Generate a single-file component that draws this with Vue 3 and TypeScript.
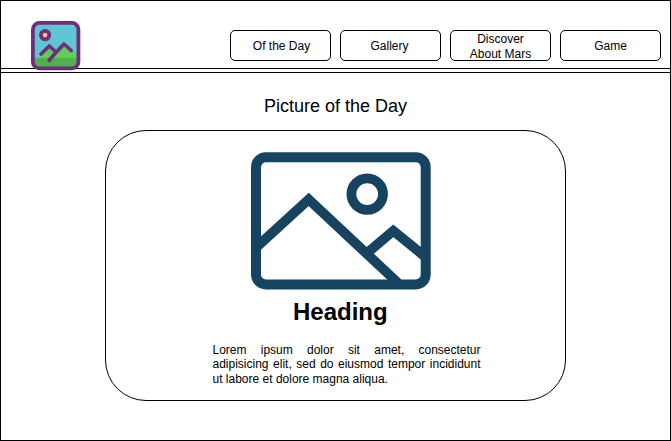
<script setup lang="ts">
interface NavItem {
  id: string
  label: string
}

const navItems: NavItem[] = [
  { id: 'day', label: 'Of the Day' },
  { id: 'gallery', label: 'Gallery' },
  { id: 'discover', label: 'Discover About Mars' },
  { id: 'game', label: 'Game' },
]
</script>

<template>
  <div class="page">
    <header class="header">
      <svg class="logo" viewBox="0 0 50 50">
        <defs>
          <clipPath id="logo-frame">
            <rect x="1.5" y="1.5" width="46.5" height="46.5" rx="6" />
          </clipPath>
        </defs>
        <g clip-path="url(#logo-frame)">
          <rect width="50" height="50" fill="#5fc5d2" />
          <path d="M0 43 L19 26 L24 33 L34 23 L50 37 V50 H0Z" fill="#62cc5a" />
          <path d="M0 37 H50 V50 H0Z" fill="#53b04e" />
        </g>
        <rect x="1.9" y="1.9" width="45.5" height="45.5" rx="6.5" fill="none" stroke="#6d2e7c" stroke-width="3.8" />
        <circle cx="14.1" cy="14.1" r="4.2" fill="#fbc65f" stroke="#6d2e7c" stroke-width="3.7" />
        <path d="M10 33 L18.3 25 L24.5 30.5 M18 39.5 L24.5 32 L33 23 L40.2 29.5" fill="none" stroke="#6d2e7c" stroke-width="3.6" stroke-linecap="round" stroke-linejoin="round" />
      </svg>
      <nav class="nav">
        <button v-for="item in navItems" :key="item.id" :class="['nav-item', item.id]" type="button">{{ item.label }}</button>
      </nav>
    </header>
    <div class="divider"></div>
    <main class="content">
      <h1 class="title">Picture of the Day</h1>
      <article class="card">
        <svg class="picture" viewBox="0 0 180 138">
          <path d="M5 95.6 L57.7 47.4 L147 131 M115.5 101.6 L142.3 78.8 L174 104.6" fill="none" stroke="#154360" stroke-width="9.8" />
          <rect x="5" y="5.2" width="169.7" height="127.2" rx="10" fill="none" stroke="#154360" stroke-width="10" />
          <circle cx="116.2" cy="42.1" r="15.8" fill="none" stroke="#154360" stroke-width="9.8" />
        </svg>
        <h2 class="heading">Heading</h2>
        <p class="text">Lorem ipsum dolor sit amet, consectetur adipisicing elit, sed do eiusmod tempor incididunt ut labore et dolore magna aliqua.</p>
      </article>
    </main>
  </div>
</template>

<style>
body {
  margin: 0;
  background: #fff;
}
</style>

<style scoped>
.page {
  box-sizing: border-box;
  width: 671px;
  height: 441px;
  border: 1px solid #000;
  overflow: hidden;
  font-family: "Liberation Sans", Arial, sans-serif;
  color: #000;
}
.header {
  box-sizing: border-box;
  display: flex;
  justify-content: space-between;
  align-items: flex-start;
  height: 68px;
  padding: 20px 9px 0 30px;
  border-bottom: 1px solid #000;
}
.logo {
  position: relative;
  z-index: 1;
  width: 50px;
  height: 50px;
}
.nav {
  display: flex;
  gap: 9px;
  padding-top: 9px;
}
.nav-item {
  box-sizing: border-box;
  width: 101px;
  height: 31px;
  padding: 2px 12px 0;
  border: 1px solid #000;
  border-radius: 5px;
  background: #fff;
  font: 12px/15px "Liberation Sans", Arial, sans-serif;
  color: #000;
}
.nav-item.day {
  padding-right: 10px;
}
.nav-item.gallery {
  padding-right: 14px;
}
.nav-item.discover {
  padding-top: 1px;
}
.divider {
  height: 3px;
  border-bottom: 1px solid #000;
}
.content {
  display: flex;
  flex-direction: column;
  align-items: center;
  padding-top: 22px;
}
.title {
  margin: 0 0 13px;
  font-size: 18px;
  line-height: 22px;
  font-weight: 400;
}
.card {
  box-sizing: border-box;
  display: flex;
  flex-direction: column;
  width: 461px;
  height: 271px;
  padding: 21px 84px 0 106.5px;
  border: 1px solid #000;
  border-radius: 41px;
}
.picture {
  width: 180px;
  height: 138px;
  margin-left: 38.5px;
}
.heading {
  margin: 8px 0 0;
  padding-left: 80.5px;
  font-size: 24px;
  line-height: 28px;
}
.text {
  width: 268px;
  margin: 17px 0 0;
  font-size: 12px;
  line-height: 14.4px;
  text-align: justify;
}
</style>
